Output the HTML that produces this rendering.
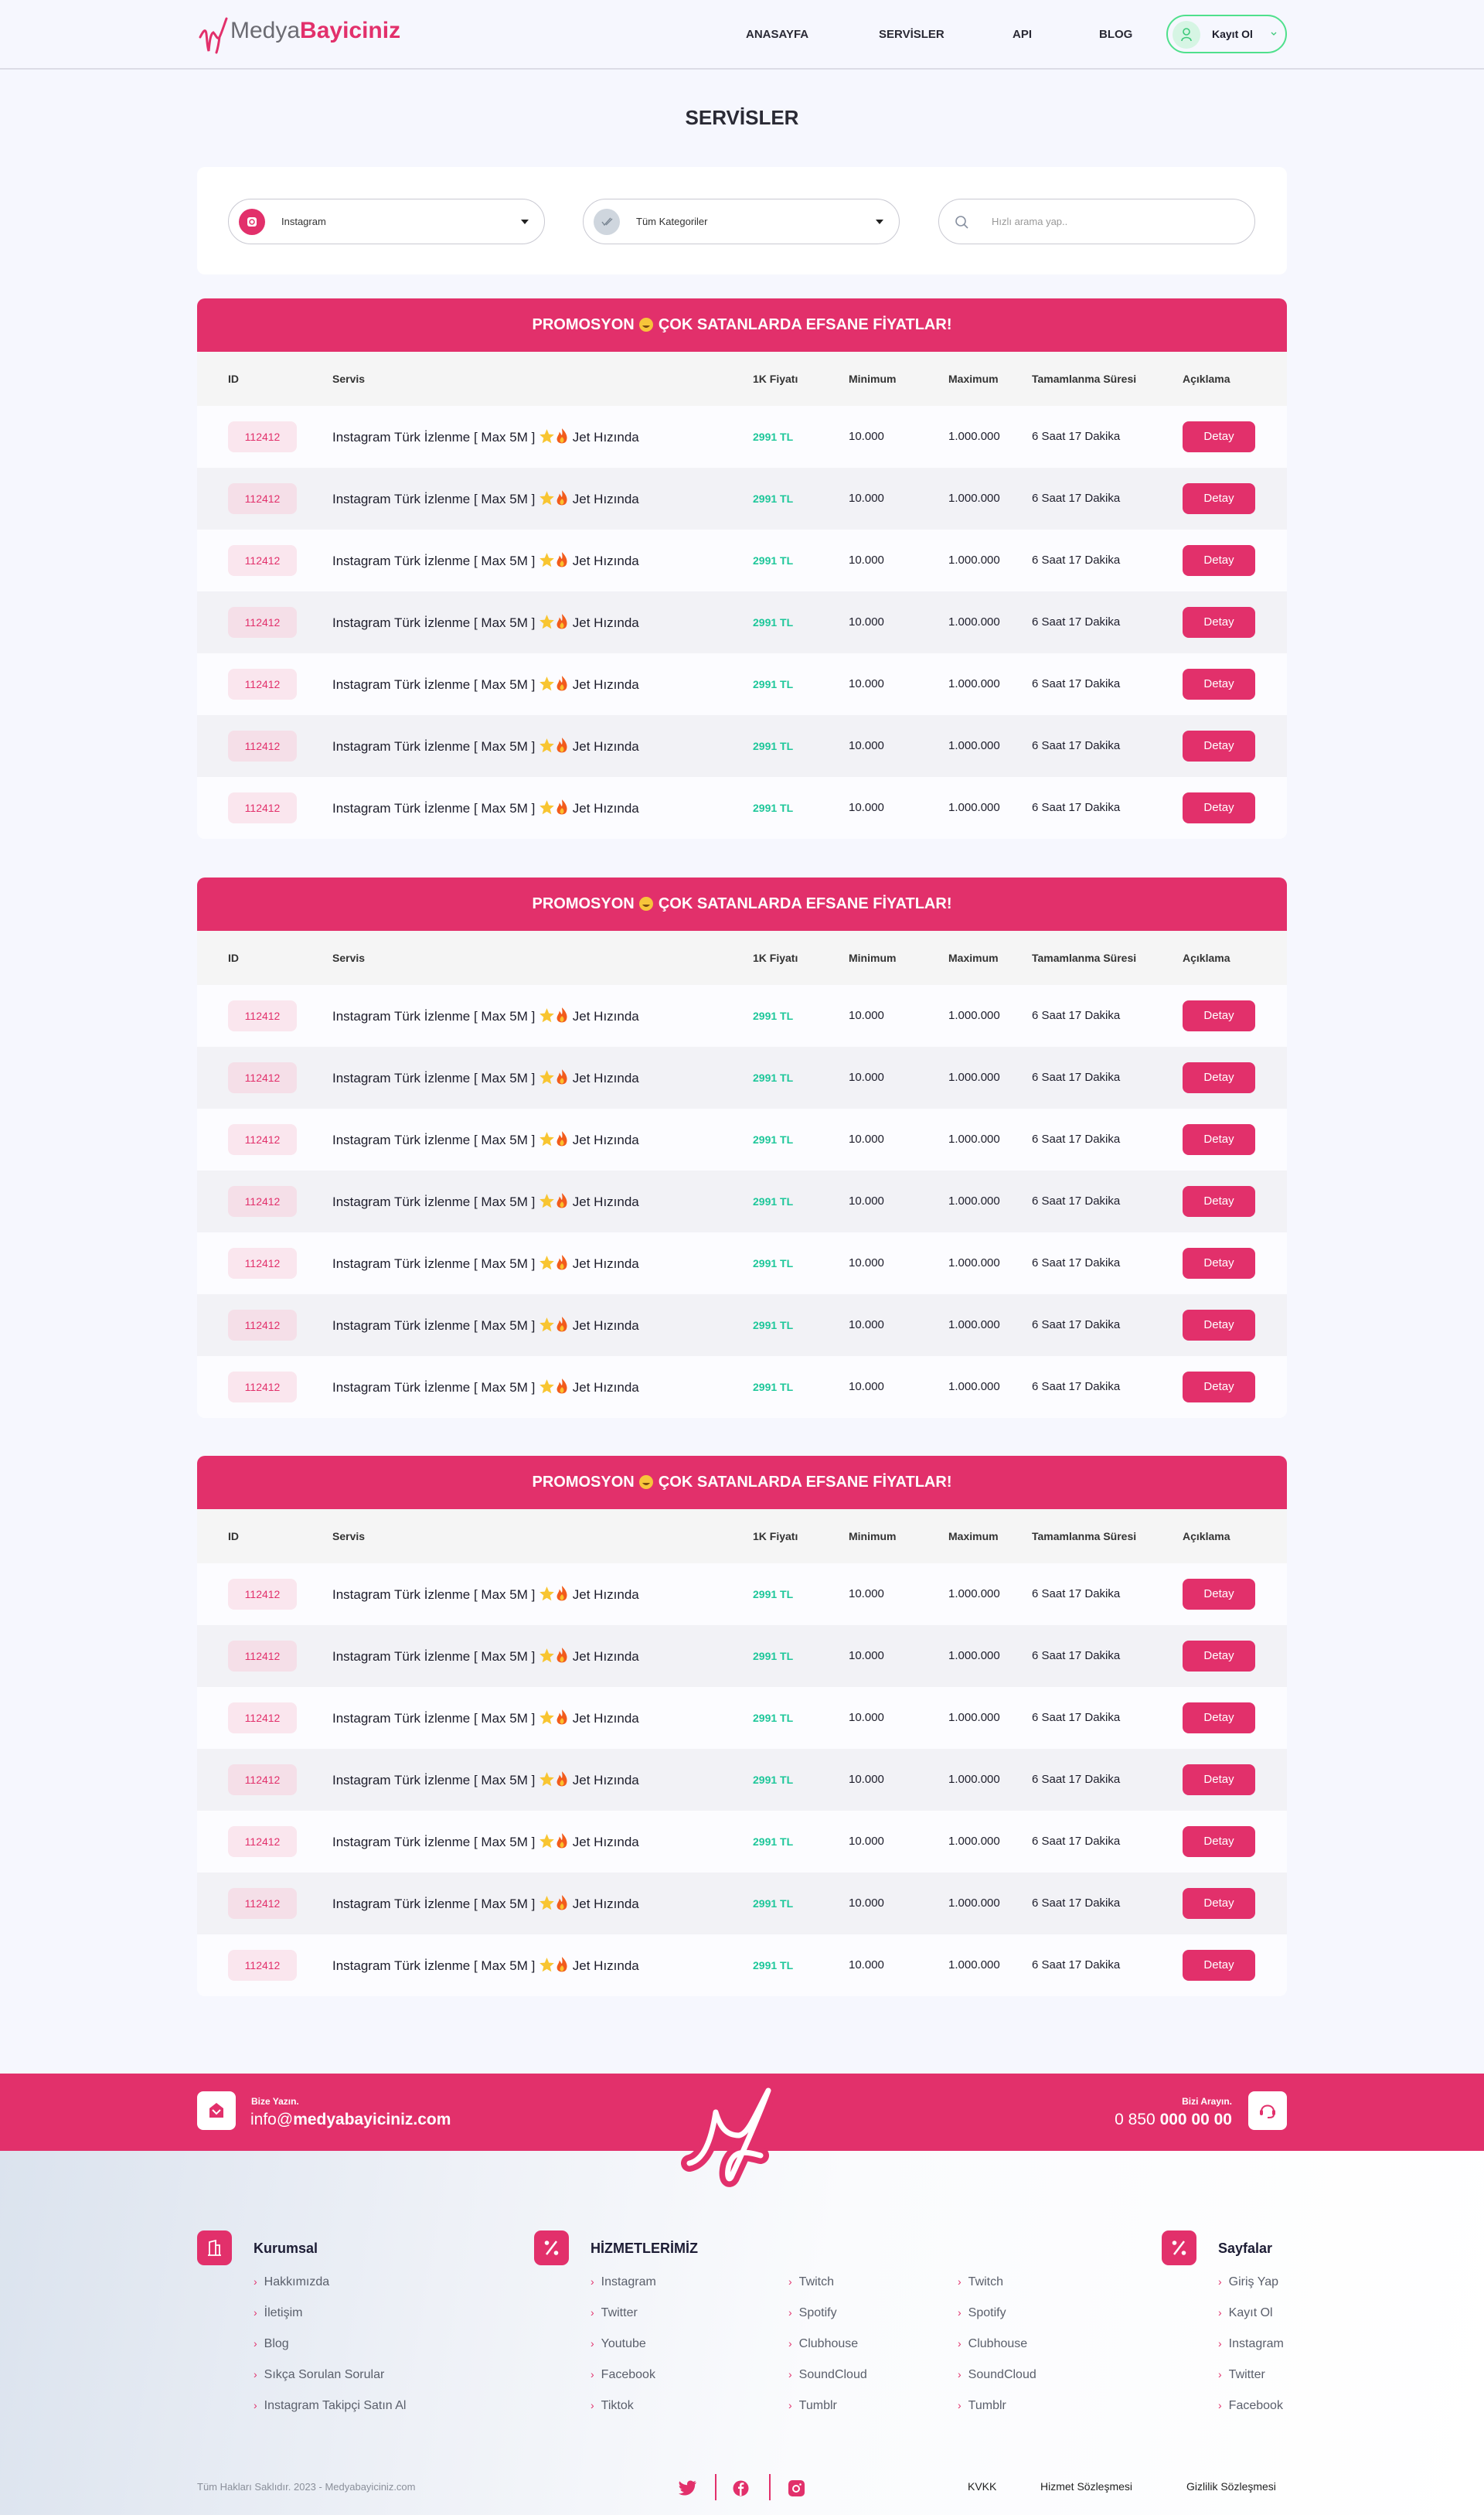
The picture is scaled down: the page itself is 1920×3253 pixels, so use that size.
<!DOCTYPE html>
<html><head><meta charset="utf-8"><style>
*{margin:0;padding:0;box-sizing:border-box}
body{width:1920px;height:3253px;background:#f6f7fe;font-family:"Liberation Sans",sans-serif;color:#1d1d2b;position:relative;overflow:hidden}
.abs{position:absolute}
header{position:absolute;left:0;top:0;width:1920px;height:90px;border-bottom:2px solid #dcdce6}
.nav{position:absolute;top:36px;font-size:15px;font-weight:bold;color:#2a2a35}
.kayit{position:absolute;left:1509px;top:19px;width:156px;height:50px;border:2px solid #4fe08c;border-radius:25px}
.kayit .av{position:absolute;left:6px;top:6px;width:36px;height:36px;border-radius:50%;background:#d6f5e4}
.kayit span{position:absolute;left:57px;top:15px;font-size:14px;font-weight:bold}
h1{position:absolute;left:0;width:1920px;top:137px;text-align:center;font-size:26px;font-weight:bold;color:#2a2a35}
.card{position:absolute;left:255px;top:216px;width:1410px;height:139px;background:#fff;border-radius:10px}
.inp{position:absolute;top:41px;width:410px;height:59px;border:1.5px solid #c9c9d2;border-radius:30px}
.inp .c{position:absolute;left:13px;top:12px;width:34px;height:34px;border-radius:50%}
.inp .t{position:absolute;left:68px;top:21px;font-size:13px;color:#333}
.inp .arr{position:absolute;right:20px;top:26px;width:0;height:0;border-left:5px solid transparent;border-right:5px solid transparent;border-top:6px solid #222}
.tbl{position:absolute;left:255px;width:1410px;background:#fff;border-radius:10px;overflow:hidden}
.tbl .hd{height:69px;background:#e2306b;color:#fff;text-align:center;font-weight:bold;font-size:20px;line-height:69px}
.row{position:relative;height:80px;background:#fcfcff;font-size:15px}
.row:nth-child(odd){background:#f2f2f6}
.row.th{height:70px;background:#f5f5f5;font-size:14px;font-weight:bold}
.row div{position:absolute;top:31px}
.row.th div{top:27px;color:#333}
.c1{left:40px}.c2{left:175px}.c3{left:719px}.c4{left:843px}.c5{left:972px}.c6{left:1080px}.c7{left:1275px}
.row .c2:not(.x){font-size:17px;top:28px}
.row.th .c2{font-size:14px;top:27px}
.row .id{left:40px;top:20px;width:89px;height:40px;border-radius:8px;background:#fae6ee;color:#e2306b;font-size:14px;text-align:center;line-height:40px}
.row:nth-child(odd) .id{background:#f5dfe8}
.row .pr{color:#1ec79a;font-weight:bold;font-size:14px;top:32px}
.row .bt{left:1275px;top:20px;width:94px;height:40px;border-radius:8px;background:#e2306b;color:#fff;font-size:15px;text-align:center;line-height:40px}
.em{display:inline-block;vertical-align:-4px}
.band{position:absolute;left:0;top:2682px;width:1920px;height:100px;background:#e2306b}
.foot{position:absolute;left:0;top:2782px;width:1920px;height:471px;background:linear-gradient(100deg,#dbe3ee 0%,#eef1f7 30%,#fafbfd 55%,#fff 100%)}
.fi{position:absolute;width:45px;height:45px;border-radius:9px;background:#e2306b}
.fh{position:absolute;font-size:18px;font-weight:bold;color:#1d1d35}
.ln{position:absolute;font-size:16px;color:#5a5f6b}
.ln:before{content:"›";color:#e2306b;margin-right:9px;font-size:14px}
.bl{position:absolute;top:3208px;font-size:14px;color:#222}
</style></head><body>
<header>
<svg class="abs" style="left:256px;top:22px" width="40" height="48" viewBox="0 0 40 48"><path d="M3 26 C7 18 10 14 11 22 C12 30 12 38 14 44 C15 34 16 22 20 20 C24 24 25 30 28 26 C31 20 34 10 37 2 M28 26 C27 34 26 40 24 46" fill="none" stroke="#e2306b" stroke-width="3" stroke-linecap="round"/></svg>
<div class="abs" style="left:298px;top:22px;font-size:30px;line-height:36px"><span style="color:#6b6b72">Medya</span><span style="color:#e2306b;font-weight:bold">Bayiciniz</span></div>
<div class="nav" style="left:965px">ANASAYFA</div>
<div class="nav" style="left:1137px">SERVİSLER</div>
<div class="nav" style="left:1310px">API</div>
<div class="nav" style="left:1422px">BLOG</div>
<div class="kayit"><div class="av"><svg width="36" height="36"><circle cx="18" cy="14" r="4" fill="none" stroke="#3cc97a" stroke-width="1.6"/><path d="M12 26 C12 20 24 20 24 26" fill="none" stroke="#3cc97a" stroke-width="1.6"/></svg></div><span>Kayıt Ol</span><svg class="abs" style="left:133px;top:20px" width="8" height="6"><path d="M1 1 L4 4 L7 1" fill="none" stroke="#3cc97a" stroke-width="1.3"/></svg></div>
</header>
<h1>SERVİSLER</h1>
<div class="card">
<div class="inp" style="left:40px"><div class="c" style="background:#e2306b"><svg width="34" height="34"><rect x="11" y="11" width="12" height="12" rx="3" fill="#fff"/><circle cx="17" cy="17" r="3" fill="none" stroke="#e2306b" stroke-width="1.5"/></svg></div><div class="t">Instagram</div><div class="arr"></div></div>
<div class="inp" style="left:499px"><div class="c" style="background:#cfd6de"><svg width="34" height="34"><path d="M11 17 L14 21 L22 12 M16 21 L24 13" fill="none" stroke="#7b8794" stroke-width="1.4"/></svg></div><div class="t">Tüm Kategoriler</div><div class="arr"></div></div>
<div class="inp" style="left:959px"><svg class="abs" style="left:20px;top:20px" width="20" height="20"><circle cx="8" cy="8" r="6" fill="none" stroke="#8790a0" stroke-width="1.6"/><path d="M12.5 12.5 L17 17" stroke="#8790a0" stroke-width="1.6"/></svg><div class="t" style="left:68px;color:#999">Hızlı arama yap..</div></div>
</div>

<div class="tbl" style="top:386px">
<div class="hd">PROMOSYON <svg class="em" width="20" height="20"><circle cx="10" cy="10" r="9" fill="#f7c53a"/><path d="M5 11 Q10 17 15 11Z" fill="#7a4a10"/></svg> ÇOK SATANLARDA EFSANE FİYATLAR!</div>
<div>
<div class="row th"><div class="c1">ID</div><div class="c2">Servis</div><div class="c3">1K Fiyatı</div><div class="c4">Minimum</div><div class="c5">Maximum</div><div class="c6">Tamamlanma Süresi</div><div class="c7">Açıklama</div></div>
<div class="row"><div class="id">112412</div><div class="c2">Instagram Türk İzlenme [ Max 5M ] <svg class="em" width="21" height="21" viewBox="0 0 18 18"><path d="M9 1 L11.3 6.5 L17 7 L12.6 10.8 L14 16.5 L9 13.5 L4 16.5 L5.4 10.8 L1 7 L6.7 6.5Z" fill="#f8c531"/></svg><svg class="em" width="18" height="22" viewBox="0 0 16 20"><path d="M8 1 C14 7 15 12 13 16 C11 19.5 4 19.5 2.5 15.5 C1 11 5 9 5 5 C7 7 7 9 8 9 C9 6 8 3 8 1Z" fill="#f25b1c"/><path d="M8 11 C11 13 11 17 8 18 C5 17 5 14 8 11Z" fill="#fbc02d"/></svg> Jet Hızında</div><div class="c3 pr">2991 TL</div><div class="c4">10.000</div><div class="c5">1.000.000</div><div class="c6">6 Saat 17 Dakika</div><div class="bt">Detay</div></div>
<div class="row"><div class="id">112412</div><div class="c2">Instagram Türk İzlenme [ Max 5M ] <svg class="em" width="21" height="21" viewBox="0 0 18 18"><path d="M9 1 L11.3 6.5 L17 7 L12.6 10.8 L14 16.5 L9 13.5 L4 16.5 L5.4 10.8 L1 7 L6.7 6.5Z" fill="#f8c531"/></svg><svg class="em" width="18" height="22" viewBox="0 0 16 20"><path d="M8 1 C14 7 15 12 13 16 C11 19.5 4 19.5 2.5 15.5 C1 11 5 9 5 5 C7 7 7 9 8 9 C9 6 8 3 8 1Z" fill="#f25b1c"/><path d="M8 11 C11 13 11 17 8 18 C5 17 5 14 8 11Z" fill="#fbc02d"/></svg> Jet Hızında</div><div class="c3 pr">2991 TL</div><div class="c4">10.000</div><div class="c5">1.000.000</div><div class="c6">6 Saat 17 Dakika</div><div class="bt">Detay</div></div>
<div class="row"><div class="id">112412</div><div class="c2">Instagram Türk İzlenme [ Max 5M ] <svg class="em" width="21" height="21" viewBox="0 0 18 18"><path d="M9 1 L11.3 6.5 L17 7 L12.6 10.8 L14 16.5 L9 13.5 L4 16.5 L5.4 10.8 L1 7 L6.7 6.5Z" fill="#f8c531"/></svg><svg class="em" width="18" height="22" viewBox="0 0 16 20"><path d="M8 1 C14 7 15 12 13 16 C11 19.5 4 19.5 2.5 15.5 C1 11 5 9 5 5 C7 7 7 9 8 9 C9 6 8 3 8 1Z" fill="#f25b1c"/><path d="M8 11 C11 13 11 17 8 18 C5 17 5 14 8 11Z" fill="#fbc02d"/></svg> Jet Hızında</div><div class="c3 pr">2991 TL</div><div class="c4">10.000</div><div class="c5">1.000.000</div><div class="c6">6 Saat 17 Dakika</div><div class="bt">Detay</div></div>
<div class="row"><div class="id">112412</div><div class="c2">Instagram Türk İzlenme [ Max 5M ] <svg class="em" width="21" height="21" viewBox="0 0 18 18"><path d="M9 1 L11.3 6.5 L17 7 L12.6 10.8 L14 16.5 L9 13.5 L4 16.5 L5.4 10.8 L1 7 L6.7 6.5Z" fill="#f8c531"/></svg><svg class="em" width="18" height="22" viewBox="0 0 16 20"><path d="M8 1 C14 7 15 12 13 16 C11 19.5 4 19.5 2.5 15.5 C1 11 5 9 5 5 C7 7 7 9 8 9 C9 6 8 3 8 1Z" fill="#f25b1c"/><path d="M8 11 C11 13 11 17 8 18 C5 17 5 14 8 11Z" fill="#fbc02d"/></svg> Jet Hızında</div><div class="c3 pr">2991 TL</div><div class="c4">10.000</div><div class="c5">1.000.000</div><div class="c6">6 Saat 17 Dakika</div><div class="bt">Detay</div></div>
<div class="row"><div class="id">112412</div><div class="c2">Instagram Türk İzlenme [ Max 5M ] <svg class="em" width="21" height="21" viewBox="0 0 18 18"><path d="M9 1 L11.3 6.5 L17 7 L12.6 10.8 L14 16.5 L9 13.5 L4 16.5 L5.4 10.8 L1 7 L6.7 6.5Z" fill="#f8c531"/></svg><svg class="em" width="18" height="22" viewBox="0 0 16 20"><path d="M8 1 C14 7 15 12 13 16 C11 19.5 4 19.5 2.5 15.5 C1 11 5 9 5 5 C7 7 7 9 8 9 C9 6 8 3 8 1Z" fill="#f25b1c"/><path d="M8 11 C11 13 11 17 8 18 C5 17 5 14 8 11Z" fill="#fbc02d"/></svg> Jet Hızında</div><div class="c3 pr">2991 TL</div><div class="c4">10.000</div><div class="c5">1.000.000</div><div class="c6">6 Saat 17 Dakika</div><div class="bt">Detay</div></div>
<div class="row"><div class="id">112412</div><div class="c2">Instagram Türk İzlenme [ Max 5M ] <svg class="em" width="21" height="21" viewBox="0 0 18 18"><path d="M9 1 L11.3 6.5 L17 7 L12.6 10.8 L14 16.5 L9 13.5 L4 16.5 L5.4 10.8 L1 7 L6.7 6.5Z" fill="#f8c531"/></svg><svg class="em" width="18" height="22" viewBox="0 0 16 20"><path d="M8 1 C14 7 15 12 13 16 C11 19.5 4 19.5 2.5 15.5 C1 11 5 9 5 5 C7 7 7 9 8 9 C9 6 8 3 8 1Z" fill="#f25b1c"/><path d="M8 11 C11 13 11 17 8 18 C5 17 5 14 8 11Z" fill="#fbc02d"/></svg> Jet Hızında</div><div class="c3 pr">2991 TL</div><div class="c4">10.000</div><div class="c5">1.000.000</div><div class="c6">6 Saat 17 Dakika</div><div class="bt">Detay</div></div>
<div class="row"><div class="id">112412</div><div class="c2">Instagram Türk İzlenme [ Max 5M ] <svg class="em" width="21" height="21" viewBox="0 0 18 18"><path d="M9 1 L11.3 6.5 L17 7 L12.6 10.8 L14 16.5 L9 13.5 L4 16.5 L5.4 10.8 L1 7 L6.7 6.5Z" fill="#f8c531"/></svg><svg class="em" width="18" height="22" viewBox="0 0 16 20"><path d="M8 1 C14 7 15 12 13 16 C11 19.5 4 19.5 2.5 15.5 C1 11 5 9 5 5 C7 7 7 9 8 9 C9 6 8 3 8 1Z" fill="#f25b1c"/><path d="M8 11 C11 13 11 17 8 18 C5 17 5 14 8 11Z" fill="#fbc02d"/></svg> Jet Hızında</div><div class="c3 pr">2991 TL</div><div class="c4">10.000</div><div class="c5">1.000.000</div><div class="c6">6 Saat 17 Dakika</div><div class="bt">Detay</div></div>
</div></div>

<div class="tbl" style="top:1135px">
<div class="hd">PROMOSYON <svg class="em" width="20" height="20"><circle cx="10" cy="10" r="9" fill="#f7c53a"/><path d="M5 11 Q10 17 15 11Z" fill="#7a4a10"/></svg> ÇOK SATANLARDA EFSANE FİYATLAR!</div>
<div>
<div class="row th"><div class="c1">ID</div><div class="c2">Servis</div><div class="c3">1K Fiyatı</div><div class="c4">Minimum</div><div class="c5">Maximum</div><div class="c6">Tamamlanma Süresi</div><div class="c7">Açıklama</div></div>
<div class="row"><div class="id">112412</div><div class="c2">Instagram Türk İzlenme [ Max 5M ] <svg class="em" width="21" height="21" viewBox="0 0 18 18"><path d="M9 1 L11.3 6.5 L17 7 L12.6 10.8 L14 16.5 L9 13.5 L4 16.5 L5.4 10.8 L1 7 L6.7 6.5Z" fill="#f8c531"/></svg><svg class="em" width="18" height="22" viewBox="0 0 16 20"><path d="M8 1 C14 7 15 12 13 16 C11 19.5 4 19.5 2.5 15.5 C1 11 5 9 5 5 C7 7 7 9 8 9 C9 6 8 3 8 1Z" fill="#f25b1c"/><path d="M8 11 C11 13 11 17 8 18 C5 17 5 14 8 11Z" fill="#fbc02d"/></svg> Jet Hızında</div><div class="c3 pr">2991 TL</div><div class="c4">10.000</div><div class="c5">1.000.000</div><div class="c6">6 Saat 17 Dakika</div><div class="bt">Detay</div></div>
<div class="row"><div class="id">112412</div><div class="c2">Instagram Türk İzlenme [ Max 5M ] <svg class="em" width="21" height="21" viewBox="0 0 18 18"><path d="M9 1 L11.3 6.5 L17 7 L12.6 10.8 L14 16.5 L9 13.5 L4 16.5 L5.4 10.8 L1 7 L6.7 6.5Z" fill="#f8c531"/></svg><svg class="em" width="18" height="22" viewBox="0 0 16 20"><path d="M8 1 C14 7 15 12 13 16 C11 19.5 4 19.5 2.5 15.5 C1 11 5 9 5 5 C7 7 7 9 8 9 C9 6 8 3 8 1Z" fill="#f25b1c"/><path d="M8 11 C11 13 11 17 8 18 C5 17 5 14 8 11Z" fill="#fbc02d"/></svg> Jet Hızında</div><div class="c3 pr">2991 TL</div><div class="c4">10.000</div><div class="c5">1.000.000</div><div class="c6">6 Saat 17 Dakika</div><div class="bt">Detay</div></div>
<div class="row"><div class="id">112412</div><div class="c2">Instagram Türk İzlenme [ Max 5M ] <svg class="em" width="21" height="21" viewBox="0 0 18 18"><path d="M9 1 L11.3 6.5 L17 7 L12.6 10.8 L14 16.5 L9 13.5 L4 16.5 L5.4 10.8 L1 7 L6.7 6.5Z" fill="#f8c531"/></svg><svg class="em" width="18" height="22" viewBox="0 0 16 20"><path d="M8 1 C14 7 15 12 13 16 C11 19.5 4 19.5 2.5 15.5 C1 11 5 9 5 5 C7 7 7 9 8 9 C9 6 8 3 8 1Z" fill="#f25b1c"/><path d="M8 11 C11 13 11 17 8 18 C5 17 5 14 8 11Z" fill="#fbc02d"/></svg> Jet Hızında</div><div class="c3 pr">2991 TL</div><div class="c4">10.000</div><div class="c5">1.000.000</div><div class="c6">6 Saat 17 Dakika</div><div class="bt">Detay</div></div>
<div class="row"><div class="id">112412</div><div class="c2">Instagram Türk İzlenme [ Max 5M ] <svg class="em" width="21" height="21" viewBox="0 0 18 18"><path d="M9 1 L11.3 6.5 L17 7 L12.6 10.8 L14 16.5 L9 13.5 L4 16.5 L5.4 10.8 L1 7 L6.7 6.5Z" fill="#f8c531"/></svg><svg class="em" width="18" height="22" viewBox="0 0 16 20"><path d="M8 1 C14 7 15 12 13 16 C11 19.5 4 19.5 2.5 15.5 C1 11 5 9 5 5 C7 7 7 9 8 9 C9 6 8 3 8 1Z" fill="#f25b1c"/><path d="M8 11 C11 13 11 17 8 18 C5 17 5 14 8 11Z" fill="#fbc02d"/></svg> Jet Hızında</div><div class="c3 pr">2991 TL</div><div class="c4">10.000</div><div class="c5">1.000.000</div><div class="c6">6 Saat 17 Dakika</div><div class="bt">Detay</div></div>
<div class="row"><div class="id">112412</div><div class="c2">Instagram Türk İzlenme [ Max 5M ] <svg class="em" width="21" height="21" viewBox="0 0 18 18"><path d="M9 1 L11.3 6.5 L17 7 L12.6 10.8 L14 16.5 L9 13.5 L4 16.5 L5.4 10.8 L1 7 L6.7 6.5Z" fill="#f8c531"/></svg><svg class="em" width="18" height="22" viewBox="0 0 16 20"><path d="M8 1 C14 7 15 12 13 16 C11 19.5 4 19.5 2.5 15.5 C1 11 5 9 5 5 C7 7 7 9 8 9 C9 6 8 3 8 1Z" fill="#f25b1c"/><path d="M8 11 C11 13 11 17 8 18 C5 17 5 14 8 11Z" fill="#fbc02d"/></svg> Jet Hızında</div><div class="c3 pr">2991 TL</div><div class="c4">10.000</div><div class="c5">1.000.000</div><div class="c6">6 Saat 17 Dakika</div><div class="bt">Detay</div></div>
<div class="row"><div class="id">112412</div><div class="c2">Instagram Türk İzlenme [ Max 5M ] <svg class="em" width="21" height="21" viewBox="0 0 18 18"><path d="M9 1 L11.3 6.5 L17 7 L12.6 10.8 L14 16.5 L9 13.5 L4 16.5 L5.4 10.8 L1 7 L6.7 6.5Z" fill="#f8c531"/></svg><svg class="em" width="18" height="22" viewBox="0 0 16 20"><path d="M8 1 C14 7 15 12 13 16 C11 19.5 4 19.5 2.5 15.5 C1 11 5 9 5 5 C7 7 7 9 8 9 C9 6 8 3 8 1Z" fill="#f25b1c"/><path d="M8 11 C11 13 11 17 8 18 C5 17 5 14 8 11Z" fill="#fbc02d"/></svg> Jet Hızında</div><div class="c3 pr">2991 TL</div><div class="c4">10.000</div><div class="c5">1.000.000</div><div class="c6">6 Saat 17 Dakika</div><div class="bt">Detay</div></div>
<div class="row"><div class="id">112412</div><div class="c2">Instagram Türk İzlenme [ Max 5M ] <svg class="em" width="21" height="21" viewBox="0 0 18 18"><path d="M9 1 L11.3 6.5 L17 7 L12.6 10.8 L14 16.5 L9 13.5 L4 16.5 L5.4 10.8 L1 7 L6.7 6.5Z" fill="#f8c531"/></svg><svg class="em" width="18" height="22" viewBox="0 0 16 20"><path d="M8 1 C14 7 15 12 13 16 C11 19.5 4 19.5 2.5 15.5 C1 11 5 9 5 5 C7 7 7 9 8 9 C9 6 8 3 8 1Z" fill="#f25b1c"/><path d="M8 11 C11 13 11 17 8 18 C5 17 5 14 8 11Z" fill="#fbc02d"/></svg> Jet Hızında</div><div class="c3 pr">2991 TL</div><div class="c4">10.000</div><div class="c5">1.000.000</div><div class="c6">6 Saat 17 Dakika</div><div class="bt">Detay</div></div>
</div></div>

<div class="tbl" style="top:1883px">
<div class="hd">PROMOSYON <svg class="em" width="20" height="20"><circle cx="10" cy="10" r="9" fill="#f7c53a"/><path d="M5 11 Q10 17 15 11Z" fill="#7a4a10"/></svg> ÇOK SATANLARDA EFSANE FİYATLAR!</div>
<div>
<div class="row th"><div class="c1">ID</div><div class="c2">Servis</div><div class="c3">1K Fiyatı</div><div class="c4">Minimum</div><div class="c5">Maximum</div><div class="c6">Tamamlanma Süresi</div><div class="c7">Açıklama</div></div>
<div class="row"><div class="id">112412</div><div class="c2">Instagram Türk İzlenme [ Max 5M ] <svg class="em" width="21" height="21" viewBox="0 0 18 18"><path d="M9 1 L11.3 6.5 L17 7 L12.6 10.8 L14 16.5 L9 13.5 L4 16.5 L5.4 10.8 L1 7 L6.7 6.5Z" fill="#f8c531"/></svg><svg class="em" width="18" height="22" viewBox="0 0 16 20"><path d="M8 1 C14 7 15 12 13 16 C11 19.5 4 19.5 2.5 15.5 C1 11 5 9 5 5 C7 7 7 9 8 9 C9 6 8 3 8 1Z" fill="#f25b1c"/><path d="M8 11 C11 13 11 17 8 18 C5 17 5 14 8 11Z" fill="#fbc02d"/></svg> Jet Hızında</div><div class="c3 pr">2991 TL</div><div class="c4">10.000</div><div class="c5">1.000.000</div><div class="c6">6 Saat 17 Dakika</div><div class="bt">Detay</div></div>
<div class="row"><div class="id">112412</div><div class="c2">Instagram Türk İzlenme [ Max 5M ] <svg class="em" width="21" height="21" viewBox="0 0 18 18"><path d="M9 1 L11.3 6.5 L17 7 L12.6 10.8 L14 16.5 L9 13.5 L4 16.5 L5.4 10.8 L1 7 L6.7 6.5Z" fill="#f8c531"/></svg><svg class="em" width="18" height="22" viewBox="0 0 16 20"><path d="M8 1 C14 7 15 12 13 16 C11 19.5 4 19.5 2.5 15.5 C1 11 5 9 5 5 C7 7 7 9 8 9 C9 6 8 3 8 1Z" fill="#f25b1c"/><path d="M8 11 C11 13 11 17 8 18 C5 17 5 14 8 11Z" fill="#fbc02d"/></svg> Jet Hızında</div><div class="c3 pr">2991 TL</div><div class="c4">10.000</div><div class="c5">1.000.000</div><div class="c6">6 Saat 17 Dakika</div><div class="bt">Detay</div></div>
<div class="row"><div class="id">112412</div><div class="c2">Instagram Türk İzlenme [ Max 5M ] <svg class="em" width="21" height="21" viewBox="0 0 18 18"><path d="M9 1 L11.3 6.5 L17 7 L12.6 10.8 L14 16.5 L9 13.5 L4 16.5 L5.4 10.8 L1 7 L6.7 6.5Z" fill="#f8c531"/></svg><svg class="em" width="18" height="22" viewBox="0 0 16 20"><path d="M8 1 C14 7 15 12 13 16 C11 19.5 4 19.5 2.5 15.5 C1 11 5 9 5 5 C7 7 7 9 8 9 C9 6 8 3 8 1Z" fill="#f25b1c"/><path d="M8 11 C11 13 11 17 8 18 C5 17 5 14 8 11Z" fill="#fbc02d"/></svg> Jet Hızında</div><div class="c3 pr">2991 TL</div><div class="c4">10.000</div><div class="c5">1.000.000</div><div class="c6">6 Saat 17 Dakika</div><div class="bt">Detay</div></div>
<div class="row"><div class="id">112412</div><div class="c2">Instagram Türk İzlenme [ Max 5M ] <svg class="em" width="21" height="21" viewBox="0 0 18 18"><path d="M9 1 L11.3 6.5 L17 7 L12.6 10.8 L14 16.5 L9 13.5 L4 16.5 L5.4 10.8 L1 7 L6.7 6.5Z" fill="#f8c531"/></svg><svg class="em" width="18" height="22" viewBox="0 0 16 20"><path d="M8 1 C14 7 15 12 13 16 C11 19.5 4 19.5 2.5 15.5 C1 11 5 9 5 5 C7 7 7 9 8 9 C9 6 8 3 8 1Z" fill="#f25b1c"/><path d="M8 11 C11 13 11 17 8 18 C5 17 5 14 8 11Z" fill="#fbc02d"/></svg> Jet Hızında</div><div class="c3 pr">2991 TL</div><div class="c4">10.000</div><div class="c5">1.000.000</div><div class="c6">6 Saat 17 Dakika</div><div class="bt">Detay</div></div>
<div class="row"><div class="id">112412</div><div class="c2">Instagram Türk İzlenme [ Max 5M ] <svg class="em" width="21" height="21" viewBox="0 0 18 18"><path d="M9 1 L11.3 6.5 L17 7 L12.6 10.8 L14 16.5 L9 13.5 L4 16.5 L5.4 10.8 L1 7 L6.7 6.5Z" fill="#f8c531"/></svg><svg class="em" width="18" height="22" viewBox="0 0 16 20"><path d="M8 1 C14 7 15 12 13 16 C11 19.5 4 19.5 2.5 15.5 C1 11 5 9 5 5 C7 7 7 9 8 9 C9 6 8 3 8 1Z" fill="#f25b1c"/><path d="M8 11 C11 13 11 17 8 18 C5 17 5 14 8 11Z" fill="#fbc02d"/></svg> Jet Hızında</div><div class="c3 pr">2991 TL</div><div class="c4">10.000</div><div class="c5">1.000.000</div><div class="c6">6 Saat 17 Dakika</div><div class="bt">Detay</div></div>
<div class="row"><div class="id">112412</div><div class="c2">Instagram Türk İzlenme [ Max 5M ] <svg class="em" width="21" height="21" viewBox="0 0 18 18"><path d="M9 1 L11.3 6.5 L17 7 L12.6 10.8 L14 16.5 L9 13.5 L4 16.5 L5.4 10.8 L1 7 L6.7 6.5Z" fill="#f8c531"/></svg><svg class="em" width="18" height="22" viewBox="0 0 16 20"><path d="M8 1 C14 7 15 12 13 16 C11 19.5 4 19.5 2.5 15.5 C1 11 5 9 5 5 C7 7 7 9 8 9 C9 6 8 3 8 1Z" fill="#f25b1c"/><path d="M8 11 C11 13 11 17 8 18 C5 17 5 14 8 11Z" fill="#fbc02d"/></svg> Jet Hızında</div><div class="c3 pr">2991 TL</div><div class="c4">10.000</div><div class="c5">1.000.000</div><div class="c6">6 Saat 17 Dakika</div><div class="bt">Detay</div></div>
<div class="row"><div class="id">112412</div><div class="c2">Instagram Türk İzlenme [ Max 5M ] <svg class="em" width="21" height="21" viewBox="0 0 18 18"><path d="M9 1 L11.3 6.5 L17 7 L12.6 10.8 L14 16.5 L9 13.5 L4 16.5 L5.4 10.8 L1 7 L6.7 6.5Z" fill="#f8c531"/></svg><svg class="em" width="18" height="22" viewBox="0 0 16 20"><path d="M8 1 C14 7 15 12 13 16 C11 19.5 4 19.5 2.5 15.5 C1 11 5 9 5 5 C7 7 7 9 8 9 C9 6 8 3 8 1Z" fill="#f25b1c"/><path d="M8 11 C11 13 11 17 8 18 C5 17 5 14 8 11Z" fill="#fbc02d"/></svg> Jet Hızında</div><div class="c3 pr">2991 TL</div><div class="c4">10.000</div><div class="c5">1.000.000</div><div class="c6">6 Saat 17 Dakika</div><div class="bt">Detay</div></div>
</div></div>

<div class="band"></div>
<div class="foot"></div>
<div class="abs" style="left:255px;top:2705px;width:50px;height:50px;background:#fff;border-radius:8px"><svg width="50" height="50"><path d="M16 22 L25 15 L34 22 L34 34 L16 34Z" fill="#e2306b"/><path d="M20 24 L25 29 L30 24" fill="none" stroke="#fff" stroke-width="2"/></svg></div>
<div class="abs" style="left:325px;top:2711px;font-size:12px;font-weight:bold;color:#fff">Bize Yazın.</div>
<div class="abs" style="left:324px;top:2730px;font-size:21px;color:#fff">info@<b>medyabayiciniz.com</b></div>
<div class="abs" style="left:1400px;width:194px;text-align:right;top:2711px;font-size:12px;font-weight:bold;color:#fff">Bizi Arayın.</div>
<div class="abs" style="left:1380px;width:214px;text-align:right;top:2730px;font-size:21px;color:#fff">0 850 <b>000 00 00</b></div>
<div class="abs" style="left:1615px;top:2705px;width:50px;height:50px;background:#fff;border-radius:8px"><svg width="50" height="50"><path d="M17 26 C17 16 33 16 33 26" fill="none" stroke="#e2306b" stroke-width="2"/><rect x="15" y="24" width="4" height="7" rx="2" fill="#e2306b"/><rect x="31" y="24" width="4" height="7" rx="2" fill="#e2306b"/><path d="M33 30 C33 34 29 34 25 34" fill="none" stroke="#e2306b" stroke-width="2"/></svg></div>
<svg class="abs" style="left:860px;top:2690px" width="200" height="160" viewBox="0 0 200 160"><g fill="none" stroke-linecap="round" stroke-linejoin="round"><path d="M32 108 C50 104 60 80 66 42 C72 62 80 72 96 72 C108 70 116 48 134 14 C118 56 100 96 86 126 C80 136 78 104 94 96 C104 92 116 96 124 98" stroke="#e2306b" stroke-width="22"/><path d="M32 108 C50 104 60 80 66 42 C72 62 80 72 96 72 C108 70 116 48 134 14 C118 56 100 96 86 126 C80 136 78 104 94 96 C104 92 116 96 124 98" stroke="#fff" stroke-width="7"/></g></svg>

<div class="fi" style="left:255px;top:2885px"><svg width="45" height="45"><path d="M14 32 L31 32 M16 32 L16 15 L24 13 L24 32 M24 19 L29 19 L29 32" fill="none" stroke="#fff" stroke-width="1.8"/></svg></div>
<div class="fh" style="left:328px;top:2898px">Kurumsal</div>
<div class="fi" style="left:691px;top:2885px"><svg width="45" height="45"><path d="M16 31 L29 14" stroke="#fff" stroke-width="2.5"/><circle cx="16.5" cy="16" r="2.8" fill="#fff"/><circle cx="28.5" cy="29" r="2.8" fill="#fff"/></svg></div>
<div class="fh" style="left:764px;top:2898px">HİZMETLERİMİZ</div>
<div class="fi" style="left:1503px;top:2885px"><svg width="45" height="45"><path d="M16 31 L29 14" stroke="#fff" stroke-width="2.5"/><circle cx="16.5" cy="16" r="2.8" fill="#fff"/><circle cx="28.5" cy="29" r="2.8" fill="#fff"/></svg></div>
<div class="fh" style="left:1576px;top:2898px">Sayfalar</div>

<div class="ln" style="left:328px;top:2943px">Hakkımızda</div>
<div class="ln" style="left:328px;top:2983px">İletişim</div>
<div class="ln" style="left:328px;top:3023px">Blog</div>
<div class="ln" style="left:328px;top:3063px">Sıkça Sorulan Sorular</div>
<div class="ln" style="left:328px;top:3103px">Instagram Takipçi Satın Al</div>

<div class="ln" style="left:764px;top:2943px">Instagram</div>
<div class="ln" style="left:764px;top:2983px">Twitter</div>
<div class="ln" style="left:764px;top:3023px">Youtube</div>
<div class="ln" style="left:764px;top:3063px">Facebook</div>
<div class="ln" style="left:764px;top:3103px">Tiktok</div>

<div class="ln" style="left:1020px;top:2943px">Twitch</div>
<div class="ln" style="left:1020px;top:2983px">Spotify</div>
<div class="ln" style="left:1020px;top:3023px">Clubhouse</div>
<div class="ln" style="left:1020px;top:3063px">SoundCloud</div>
<div class="ln" style="left:1020px;top:3103px">Tumblr</div>

<div class="ln" style="left:1239px;top:2943px">Twitch</div>
<div class="ln" style="left:1239px;top:2983px">Spotify</div>
<div class="ln" style="left:1239px;top:3023px">Clubhouse</div>
<div class="ln" style="left:1239px;top:3063px">SoundCloud</div>
<div class="ln" style="left:1239px;top:3103px">Tumblr</div>

<div class="ln" style="left:1576px;top:2943px">Giriş Yap</div>
<div class="ln" style="left:1576px;top:2983px">Kayıt Ol</div>
<div class="ln" style="left:1576px;top:3023px">Instagram</div>
<div class="ln" style="left:1576px;top:3063px">Twitter</div>
<div class="ln" style="left:1576px;top:3103px">Facebook</div>

<div class="abs" style="left:255px;top:3209px;font-size:13px;color:#8a8f9a">Tüm Hakları Saklıdır. 2023 - Medyabayiciniz.com</div>
<svg class="abs" style="left:878px;top:3208px" width="24" height="20" viewBox="0 0 24 20"><path d="M23 2.5 C22 3 21 3.3 20 3.4 C21 2.8 21.8 1.8 22 0.7 C21 1.3 20 1.7 18.8 2 C17 0 13.5 0 11.8 2.3 C11 3.5 10.8 5 11.2 6.3 C7 6.1 3.5 4.2 1.2 1.3 C0 3.5 0.7 6.3 2.8 7.6 C2 7.6 1.3 7.4 0.7 7 C0.7 9.3 2.3 11.3 4.6 11.7 C3.8 12 3 12 2.3 11.8 C2.9 13.8 4.8 15.2 6.9 15.2 C5 16.8 2.6 17.5 0 17.2 C2.3 18.7 4.9 19.5 7.6 19.5 C16.5 19.5 21.4 12 21.2 5.2 C22 4.5 22.6 3.6 23 2.5Z" fill="#e2306b"/></svg>
<div class="abs" style="left:925px;top:3200px;width:1.5px;height:34px;background:#e2306b"></div>
<svg class="abs" style="left:948px;top:3208px" width="21" height="21"><circle cx="10.5" cy="10.5" r="10" fill="#e2306b"/><path d="M11.5 20 L11.5 11 L14 11 L14.3 8.5 L11.5 8.5 L11.5 7 C11.5 6 12 5.6 13 5.6 L14.4 5.6 L14.4 3.4 C13.8 3.3 13 3.2 12.3 3.2 C10.2 3.2 9 4.5 9 6.6 L9 8.5 L7 8.5 L7 11 L9 11 L9 20Z" fill="#fff"/></svg>
<div class="abs" style="left:995px;top:3200px;width:1.5px;height:34px;background:#e2306b"></div>
<svg class="abs" style="left:1020px;top:3208px" width="21" height="21"><rect x="0" y="0" width="21" height="21" rx="5" fill="#e2306b"/><circle cx="10" cy="11" r="4" fill="none" stroke="#fff" stroke-width="2"/><circle cx="15.5" cy="5.5" r="1.3" fill="#fff"/></svg>
<div class="bl" style="left:1252px">KVKK</div>
<div class="bl" style="left:1346px">Hizmet Sözleşmesi</div>
<div class="bl" style="left:1535px">Gizlilik Sözleşmesi</div>
</body></html>
